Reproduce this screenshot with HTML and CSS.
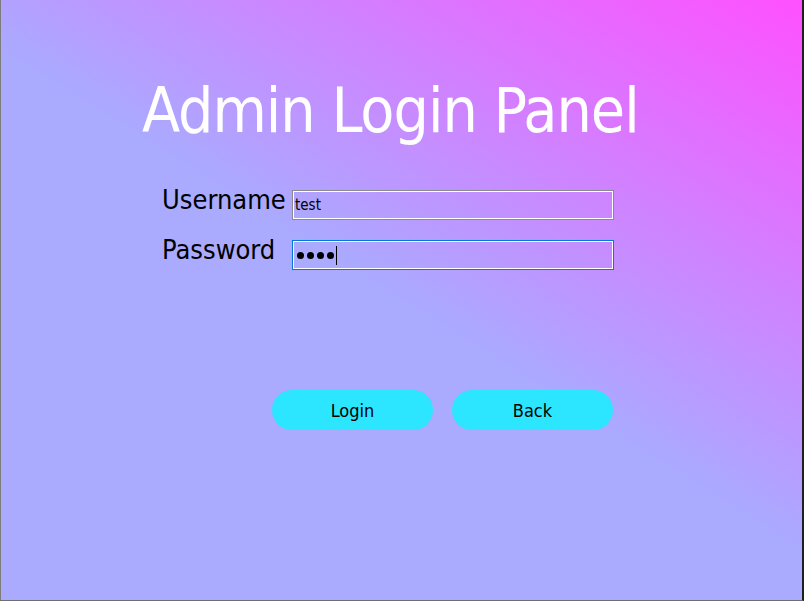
FILE: index.html
```html
<!DOCTYPE html>
<html lang="en">
<head>
<meta charset="utf-8">
<title>Admin Login Panel</title>
<link rel="stylesheet" href="styles.css">
</head>
<body>
<div class="window">
  <h1 class="title">Admin Login Panel</h1>
  <div class="form">
    <div class="label">Username</div>
    <div class="field"><span class="value">test</span></div>
    <div class="label">Password</div>
    <div class="field focused">
      <span class="dots"><span class="dot"></span><span class="dot"></span><span class="dot"></span><span class="dot"></span></span><span class="caret"></span>
    </div>
  </div>
  <div class="buttons">
    <button class="btn">Login</button>
    <button class="btn">Back</button>
  </div>
</div>
</body>
</html>
```

FILE: styles.css
```css
html, body {
  margin: 0;
  padding: 0;
}
body {
  width: 804px;
  height: 601px;
  overflow: hidden;
  font-family: "DejaVu Sans Condensed", "DejaVu Sans", sans-serif;
}
.window {
  box-sizing: border-box;
  width: 804px;
  height: 601px;
  border-left: 1px solid #7c7c7c;
  border-right: 2px solid #1f1f1f;
  border-bottom: 1px solid #6e6e6e;
  background: linear-gradient(32deg, #aaaaff 50%, #ff50ff 100%);
  display: flex;
  flex-direction: column;
  padding-top: 80px;
}
.title {
  margin: 0 0 0 141px;
  font-weight: normal;
  font-size: 62px;
  line-height: 62px;
  letter-spacing: -1px;
  color: #ffffff;
}
.form {
  margin: 48px 0 0 161px;
  display: grid;
  grid-template-columns: 130px 322px;
  row-gap: 20px;
  align-items: start;
}
.label {
  font-size: 27px;
  line-height: 20px;
  color: #000;
}
.field {
  box-sizing: border-box;
  height: 30px;
  border: 1px solid #8a8a8a;
  box-shadow: inset 0 0 0 1px #ffffff;
  display: flex;
  align-items: center;
  padding-left: 2px;
}
.field.focused {
  border-color: #0078d7;
}
.value {
  font-size: 15px;
  color: #000;
  line-height: 18px;
}
.dots {
  display: flex;
  gap: 3px;
  margin-left: 2px;
}
.dot {
  width: 7px;
  height: 7px;
  border-radius: 50%;
  background: #000;
}
.caret {
  width: 1px;
  height: 19px;
  background: #000;
  margin-left: 2px;
}
.buttons {
  margin: 120px 0 0 271px;
  display: flex;
  gap: 19px;
}
.btn {
  width: 161px;
  height: 40px;
  border: none;
  border-radius: 20px;
  background: #2ce5ff;
  font-family: "DejaVu Sans Condensed", "DejaVu Sans", sans-serif;
  font-size: 18px;
  color: #000;
  padding: 0;
}
```
